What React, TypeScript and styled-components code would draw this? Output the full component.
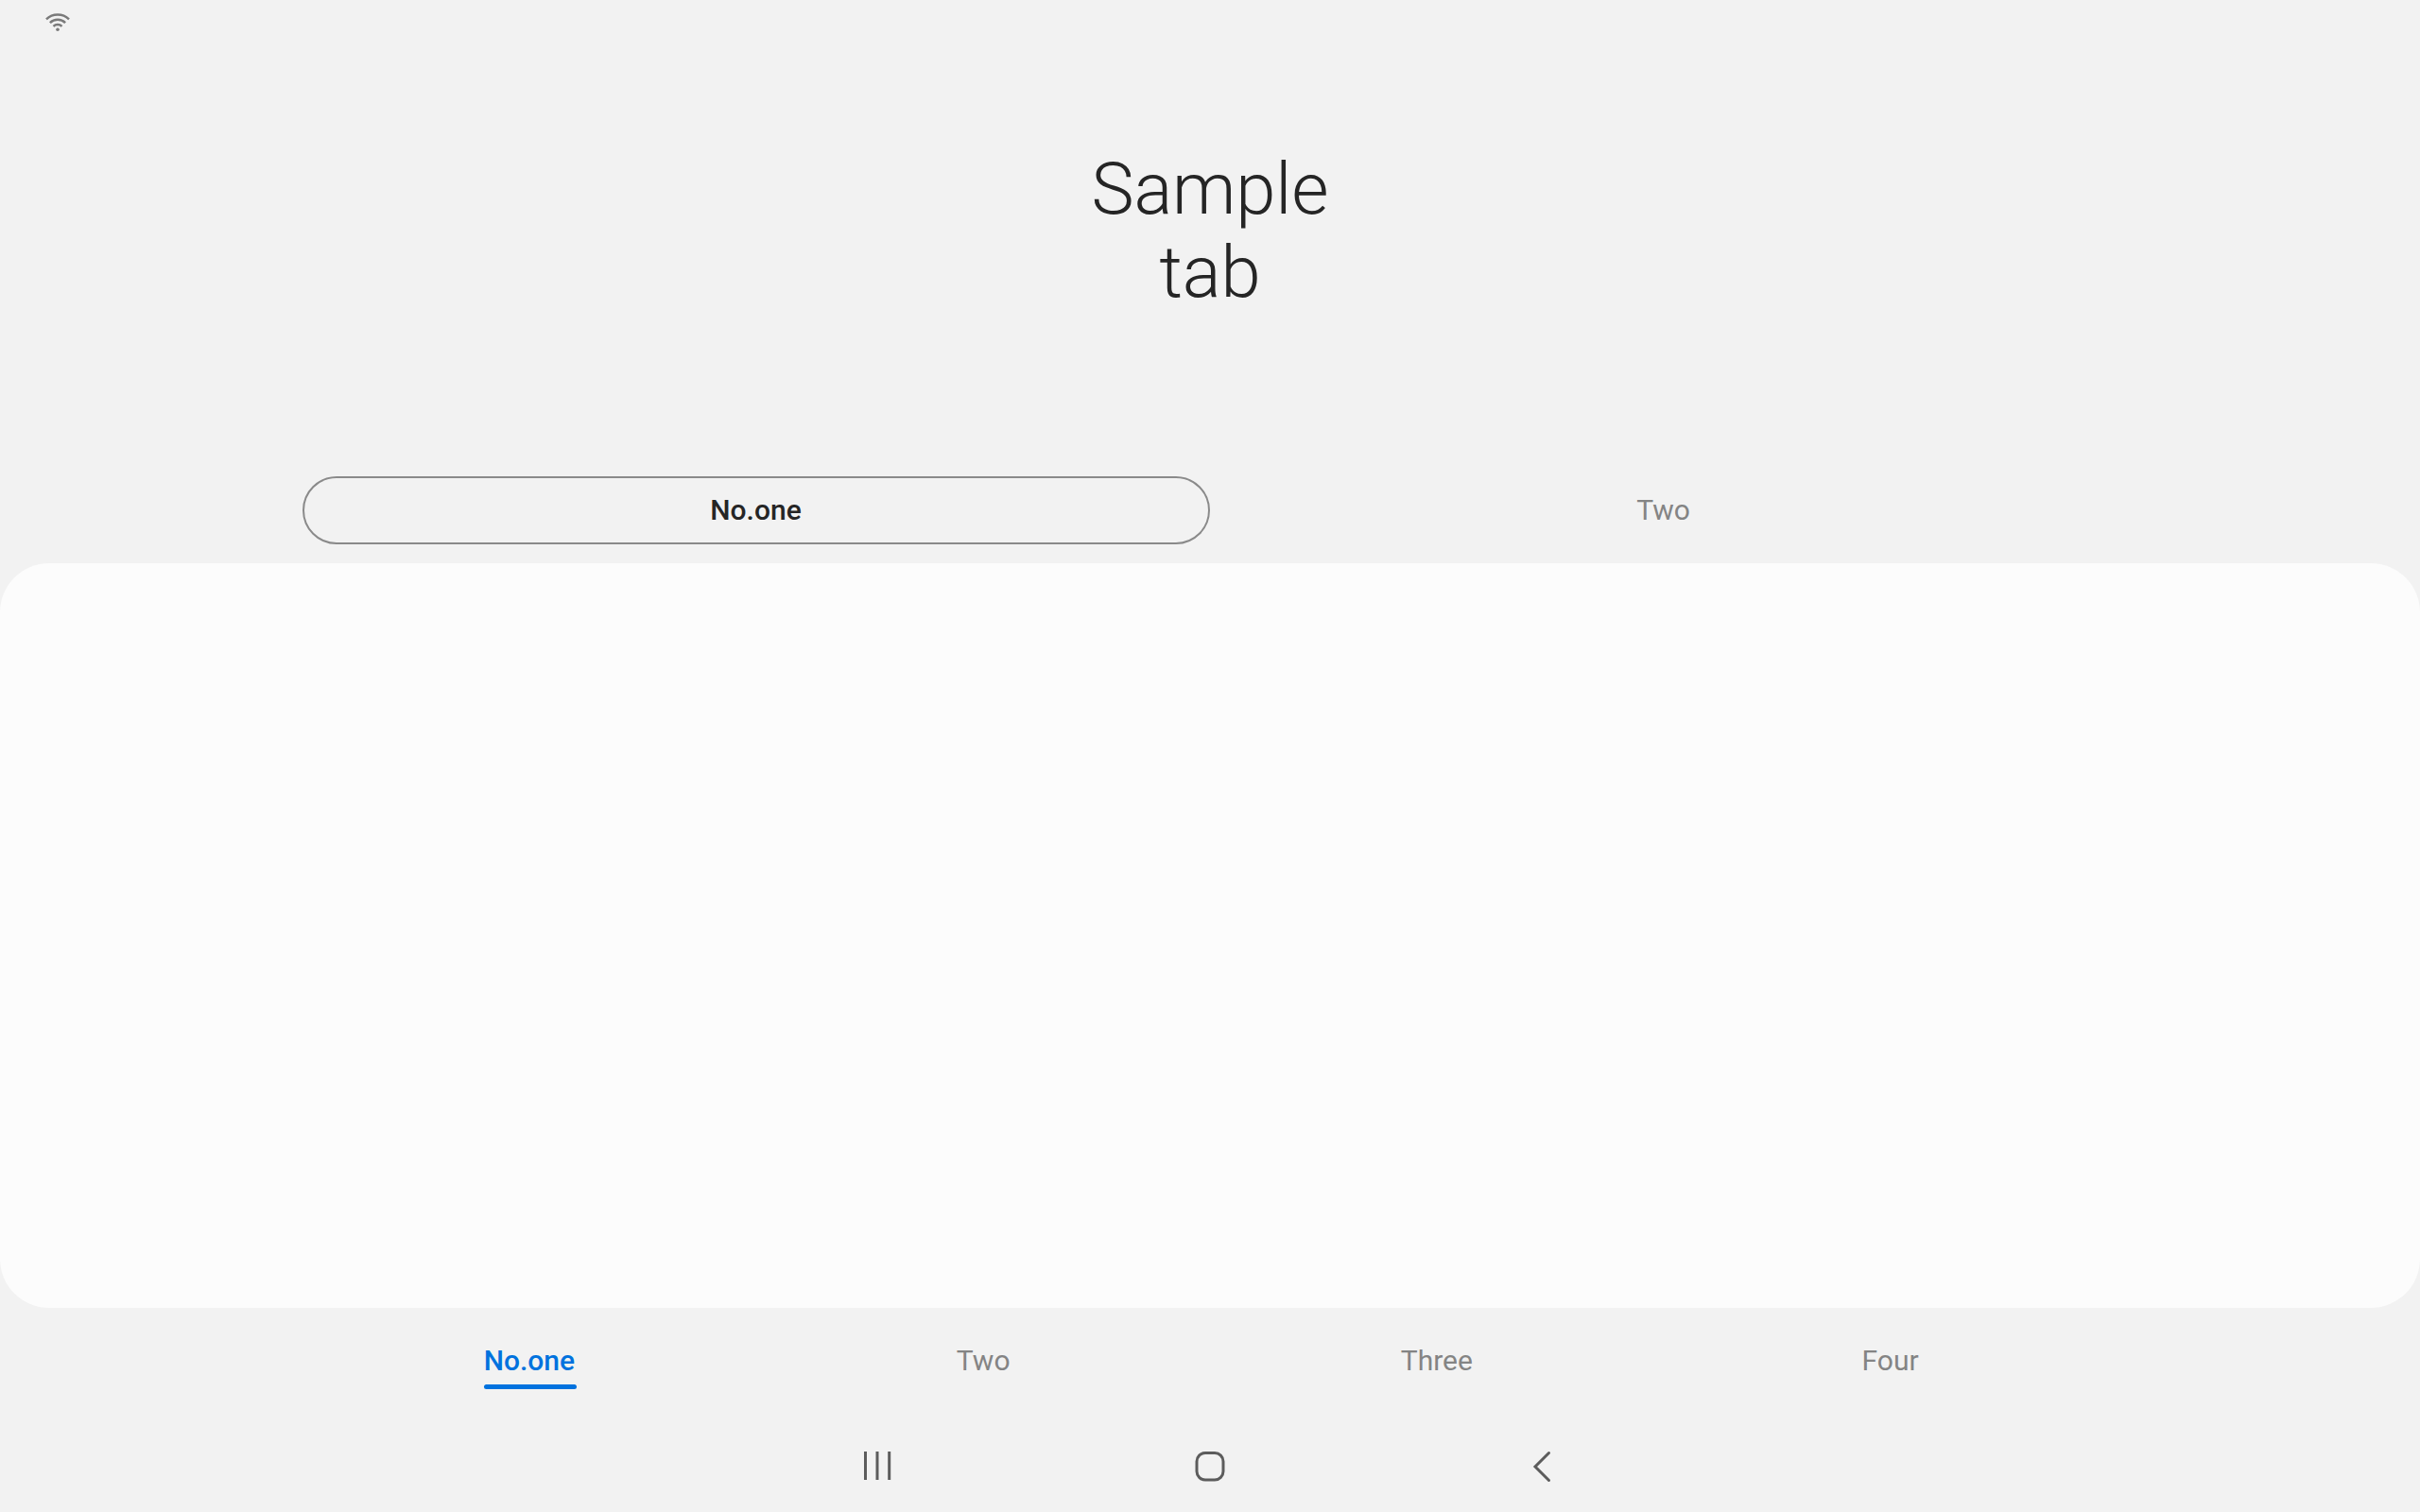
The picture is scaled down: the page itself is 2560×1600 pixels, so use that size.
import React from 'react';
import styled, { createGlobalStyle } from 'styled-components';

const Global = createGlobalStyle`
  * { box-sizing: border-box; }
  body { margin: 0; background: #f2f2f2; font-family: Roboto, sans-serif; }
`;

const Screen = styled.div`
  width: 2560px;
  height: 1600px;
  display: flex;
  flex-direction: column;
  background: #f2f2f2;
  overflow: hidden;
`;

const StatusBar = styled.header`
  height: 48px;
  padding: 10px 0 0 46px;
  svg { display: block; }
`;

const Header = styled.div`
  height: 456px;
  padding-top: 108px;
  display: flex;
  justify-content: center;
`;

const Title = styled.h1`
  margin: 0;
  width: 280px;
  font-size: 76px;
  line-height: 88px;
  font-weight: 300;
  letter-spacing: -0.15px;
  text-align: center;
  color: #252525;
`;

const SubTabs = styled.nav`
  height: 92px;
  padding: 0 320px;
  display: flex;
`;

const SubTab = styled.button<{ $active?: boolean }>`
  flex: 1;
  height: 72px;
  border: 2px solid ${(p) => (p.$active ? '#8a8a8a' : 'transparent')};
  border-radius: 36px;
  background: none;
  padding: 0 1px 2px 0;
  font: ${(p) => (p.$active ? 500 : 400)} 30px Roboto, sans-serif;
  color: ${(p) => (p.$active ? '#252525' : '#848484')};
`;

const Content = styled.main`
  height: 788px;
  border-radius: 52px;
  background: #fcfcfc;
`;

const BottomTabs = styled.nav`
  height: 116px;
  padding: 0 320px;
  display: flex;
`;

const BottomTab = styled.button<{ $active?: boolean }>`
  flex: 1;
  display: flex;
  justify-content: center;
  align-items: flex-start;
  padding: ${(p) => (p.$active ? '34px 0 0 2px' : '34px 1px 0 0')};
  border: 0;
  background: none;
  font: ${(p) => (p.$active ? 500 : 400)} 30px/44px Roboto, sans-serif;
  color: ${(p) => (p.$active ? '#0072de' : '#848484')};
`;

const TabLabel = styled.span<{ $active?: boolean }>`
  width: ${(p) => (p.$active ? '98px' : 'auto')};
  height: 52px;
  display: flex;
  flex-direction: column;
  justify-content: space-between;
  text-align: left;
  text-indent: ${(p) => (p.$active ? '-0.7px' : '0')};
  &::after {
    content: '';
    height: 5px;
    border-radius: 3px;
    background: ${(p) => (p.$active ? '#0072de' : 'transparent')};
  }
`;

const NavBar = styled.footer`
  height: 100px;
  padding: 0 752px;
  display: flex;
`;

const NavButton = styled.button`
  flex: 1;
  display: flex;
  justify-content: center;
  align-items: center;
  border: 0;
  padding: 0;
  background: none;
  color: #5c5c5c;
`;

const bottomTabs = ['No.one', 'Two', 'Three', 'Four'];

export default function App() {
  return (
    <Screen>
      <Global />
      <StatusBar>
        <svg width="30" height="26" viewBox="0 0 30 26" fill="none" stroke="#7a7a7a" strokeWidth="2.5">
          <path d="M3 10.300A17.300 17.300 0 0 1 27 10.300" />
          <path d="M6.900 14.200A11.500 11.500 0 0 1 23.100 14.200" />
          <path d="M10.500 17.800A6.400 6.400 0 0 1 19.500 17.800" />
          <circle cx="15" cy="21.300" r="1.800" fill="#7a7a7a" stroke="none" />
        </svg>
      </StatusBar>
      <Header>
        <Title>Sample<br />tab</Title>
      </Header>
      <SubTabs>
        <SubTab $active>No.one</SubTab>
        <SubTab>Two</SubTab>
      </SubTabs>
      <Content />
      <BottomTabs>
        {bottomTabs.map((t, i) => (
          <BottomTab key={t} $active={i === 0}>
            <TabLabel $active={i === 0}>{t}</TabLabel>
          </BottomTab>
        ))}
      </BottomTabs>
      <NavBar>
        <NavButton aria-label="Recents">
          <svg width="80" height="80" fill="none" stroke="currentColor" strokeWidth="3"><path d="M27.500 26V56M40 26V56M52.700 26V56" /></svg>
        </NavButton>
        <NavButton aria-label="Home">
          <svg width="80" height="80" fill="none" stroke="currentColor" strokeWidth="3"><rect x="26" y="27.500" width="28" height="28.500" rx="9" /></svg>
        </NavButton>
        <NavButton aria-label="Back">
          <svg width="80" height="80" fill="none" stroke="currentColor" strokeWidth="3" strokeLinecap="round"><path d="M46.500 27.500L32 42L46.500 56.500" /></svg>
        </NavButton>
      </NavBar>
    </Screen>
  );
}
